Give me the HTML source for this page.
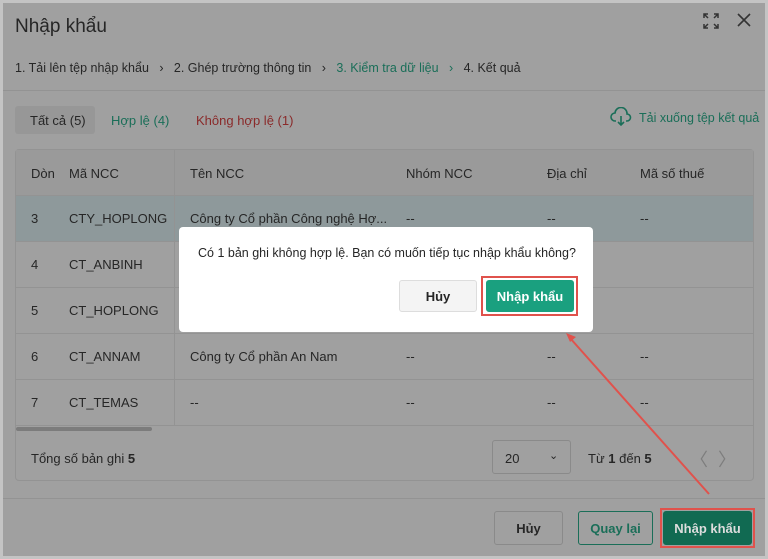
<!DOCTYPE html>
<html><head><meta charset="utf-8"><style>
*{box-sizing:border-box;margin:0;padding:0}
body{width:768px;height:559px;overflow:hidden;background:#c4c4c4;font-family:"Liberation Sans",sans-serif;font-size:13px;color:#262626;position:relative}
.m{position:absolute;left:3px;top:3px;width:762px;height:553px;background:#a0a0a0}
.a{position:absolute;white-space:nowrap}
.hl{position:absolute;left:15px;width:738px;height:1px;background:#939393}
.btn{position:absolute;border:1px solid #8a8a8a;border-radius:3px;display:flex;align-items:center;justify-content:center;font-weight:bold}
</style></head><body>
<div class="m"></div>
<div class="a" style="left:15px;top:16px;font-size:19px">Nhập khẩu</div>
<svg class="a" style="left:702px;top:12px" width="18" height="18" viewBox="0 0 18 18" fill="none" stroke="#333" stroke-width="1.5"><path d="M2 6V2h4M2 2l4 4M16 6V2h-4M16 2l-4 4M2 12v4h4M2 16l4-4M16 12v4h-4M16 16l-4-4"/></svg>
<svg class="a" style="left:737px;top:13px" width="14" height="14" viewBox="0 0 14 14" stroke="#333" stroke-width="1.6"><path d="M1 1l12 12M13 1L1 13"/></svg>
<div class="a" style="left:15px;top:61px;font-size:12.5px">1. Tải lên tệp nhập khẩu &nbsp;&nbsp;›&nbsp;&nbsp; 2. Ghép trường thông tin &nbsp;&nbsp;›&nbsp;&nbsp; <span style="color:#1a6e58">3. Kiểm tra dữ liệu</span> &nbsp;&nbsp;<span style="color:#1a6e58">›</span>&nbsp;&nbsp; 4. Kết quả</div>
<div class="a" style="left:3px;top:90px;width:762px;height:1px;background:#939393"></div>
<div class="a" style="left:15px;top:106px;width:80px;height:28px;background:#979797;border-radius:3px"></div>
<div class="a" style="left:30px;top:113px">Tất cả (5)</div>
<div class="a" style="left:111px;top:113px;color:#1a6e58">Hợp lệ (4)</div>
<div class="a" style="left:196px;top:113px;color:#8a2a2a">Không hợp lệ (1)</div>
<svg class="a" style="left:610px;top:107px" width="22" height="20" viewBox="0 0 22 20" fill="none" stroke="#1a6e58" stroke-width="1.6"><path d="M6 14H5a4 4 0 0 1 0-8 6 6 0 0 1 12 1 3.5 3.5 0 0 1 0 7h-1M11 9v9M8 15l3 3 3-3"/></svg>
<div class="a" style="left:639px;top:111px;color:#1a6e58;font-size:12.5px">Tải xuống tệp kết quả</div>
<div class="a" style="left:15px;top:149px;width:739px;height:332px;border:1px solid #939393;border-radius:4px"></div>
<div class="a" style="left:16px;top:150px;width:737px;height:45px;background:#9a9a9a"></div>
<div class="a" style="left:16px;top:195px;width:737px;height:46px;background:#8e999b"></div>
<div class="a" style="left:174px;top:150px;width:1px;height:275px;background:#939393"></div>
<div class="hl" style="top:195px"></div><div class="hl" style="top:241px"></div><div class="hl" style="top:287px"></div><div class="hl" style="top:333px"></div><div class="hl" style="top:379px"></div><div class="hl" style="top:425px"></div>
<div class="a" style="left:31px;top:166px">Dòn</div><div class="a" style="left:69px;top:166px">Mã NCC</div><div class="a" style="left:190px;top:166px">Tên NCC</div><div class="a" style="left:406px;top:166px">Nhóm NCC</div><div class="a" style="left:547px;top:166px">Địa chỉ</div><div class="a" style="left:640px;top:166px">Mã số thuế</div>
<div class="a" style="left:31px;top:211px">3</div><div class="a" style="left:69px;top:211px">CTY_HOPLONG</div><div class="a" style="left:190px;top:211px">Công ty Cổ phần Công nghệ Hợ...</div><div class="a" style="left:406px;top:211px">--</div><div class="a" style="left:547px;top:211px">--</div><div class="a" style="left:640px;top:211px">--</div>
<div class="a" style="left:31px;top:257px">4</div><div class="a" style="left:69px;top:257px">CT_ANBINH</div>
<div class="a" style="left:31px;top:303px">5</div><div class="a" style="left:69px;top:303px">CT_HOPLONG</div>
<div class="a" style="left:31px;top:349px">6</div><div class="a" style="left:69px;top:349px">CT_ANNAM</div><div class="a" style="left:190px;top:349px">Công ty Cổ phần An Nam</div><div class="a" style="left:406px;top:349px">--</div><div class="a" style="left:547px;top:349px">--</div><div class="a" style="left:640px;top:349px">--</div>
<div class="a" style="left:31px;top:395px">7</div><div class="a" style="left:69px;top:395px">CT_TEMAS</div><div class="a" style="left:190px;top:395px">--</div><div class="a" style="left:406px;top:395px">--</div><div class="a" style="left:547px;top:395px">--</div><div class="a" style="left:640px;top:395px">--</div>
<div class="a" style="left:16px;top:427px;width:136px;height:4px;background:#7c7c7c;border-radius:2px"></div>
<div class="a" style="left:31px;top:451px">Tổng số bản ghi <b>5</b></div>
<div class="a" style="left:492px;top:440px;width:79px;height:34px;border:1px solid #8a8a8a;border-radius:3px"></div>
<div class="a" style="left:505px;top:451px">20</div><div class="a" style="left:549px;top:449px;font-size:11px">⌄</div>
<div class="a" style="left:588px;top:451px">Từ <b>1</b> đến <b>5</b></div>
<div class="a" style="left:690px;top:446px;color:#7d7d7d;font-size:18px">〈 &nbsp;〉</div>
<div class="a" style="left:3px;top:498px;width:762px;height:1px;background:#939393"></div>
<div class="btn" style="left:494px;top:511px;width:69px;height:34px">Hủy</div>
<div class="btn" style="left:578px;top:511px;width:75px;height:34px;border-color:#1a6e58;color:#1a6e58">Quay lại</div>
<div class="btn" style="left:663px;top:511px;width:89px;height:34px;background:#116a52;border-color:#116a52;color:#ddd">Nhập khẩu</div>
<div class="a" style="left:660px;top:508px;width:95px;height:40px;border:2px solid #e0524c"></div>
<svg class="a" style="left:0;top:0" width="768" height="559"><path d="M709 494L570 338" stroke="#e0524c" stroke-width="2"/><path d="M566 333l10 4-6 5z" fill="#e0524c"/></svg>
<div class="a" style="left:179px;top:227px;width:414px;height:105px;background:#fff;border-radius:4px"></div>
<div class="a" style="left:198px;top:246px;font-size:12.5px">Có 1 bản ghi không hợp lệ. Bạn có muốn tiếp tục nhập khẩu không?</div>
<div class="btn" style="left:399px;top:280px;width:78px;height:32px;background:#f4f4f4;border-color:#ddd">Hủy</div>
<div class="btn" style="left:486px;top:280px;width:88px;height:32px;background:#1aa07f;border-color:#1aa07f;color:#fff">Nhập khẩu</div>
<div class="a" style="left:481px;top:276px;width:97px;height:40px;border:2px solid #e0524c"></div>
</body></html>
